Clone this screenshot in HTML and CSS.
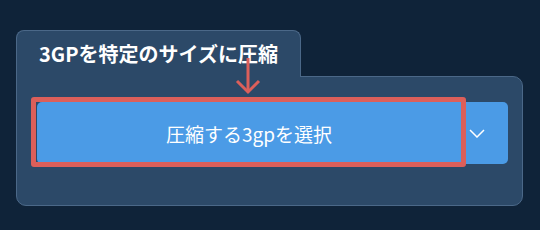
FILE: index.html
```html
<!DOCTYPE html>
<html lang="ja">
  <head>
    <meta charset="UTF-8" />
    <title>3GP圧縮</title>
    <link rel="stylesheet" href="styles.css">
  </head>
  <body>
    <div class="tool">
      <div class="tab">3GPを特定のサイズに圧縮</div>
      <div class="panel">
        <div class="btnGroup">
          <button class="mainBtn">圧縮する3gpを選択</button>
          <button class="dropBtn">
            <svg width="16" height="9" viewBox="0 0 16 9">
              <polyline points="1,1 8,8 15,1" fill="none" stroke="#fff" stroke-width="1.5" />
            </svg>
          </button>
        </div>
      </div>
      <!-- 注釈 -->
      <svg class="arrow" width="30" height="38" viewBox="0 0 30 38">
        <line x1="16" y1="0" x2="16" y2="34" stroke="#dc5f5a" stroke-width="3" />
        <polyline points="5,23 16,34 27,23" fill="none" stroke="#dc5f5a" stroke-width="3" />
      </svg>
      <div class="highlight"></div>
    </div>
  </body>
</html>
```

FILE: styles.css
```css
body {
  margin: 0;
  padding: 30px 16px 0;
  background: #0f2339;
  font-family: "Noto Sans CJK JP", "Noto Sans", sans-serif;
}

.tool {
  position: relative;
  width: 507px;
}

.tab {
  position: relative;
  z-index: 1;
  display: inline-block;
  box-sizing: border-box;
  height: 47px;
  margin-bottom: -1px;
  padding: 8px 22px 0;
  background: #2c4968;
  border: 1px solid #4b6888;
  border-bottom: none;
  border-radius: 8px 8px 0 0;
  color: #fff;
  font-size: 20px;
  font-weight: bold;
  line-height: 30px;
}

.panel {
  box-sizing: border-box;
  height: 130px;
  padding: 25px 14px 0 20px;
  background: #2c4968;
  border: 1px solid #4b6888;
  border-radius: 0 10px 10px 10px;
}

.btnGroup {
  display: flex;
  height: 62px;
  border-radius: 5px;
  overflow: hidden;
}

button {
  border: none;
  outline: none;
  background: #4b9be6;
  color: #fff;
  font-family: inherit;
}

.mainBtn {
  flex: 1;
  font-size: 19px;
}

.dropBtn {
  width: 47px;
  display: flex;
  align-items: center;
  padding: 0 0 0 8px;
}

.arrow {
  position: absolute;
  left: 216px;
  top: 28px;
  z-index: 2;
}

.highlight {
  position: absolute;
  left: 15px;
  top: 67px;
  width: 435px;
  height: 70px;
  box-sizing: border-box;
  border: 5px solid #dc5f5a;
  border-radius: 3px;
}
```
